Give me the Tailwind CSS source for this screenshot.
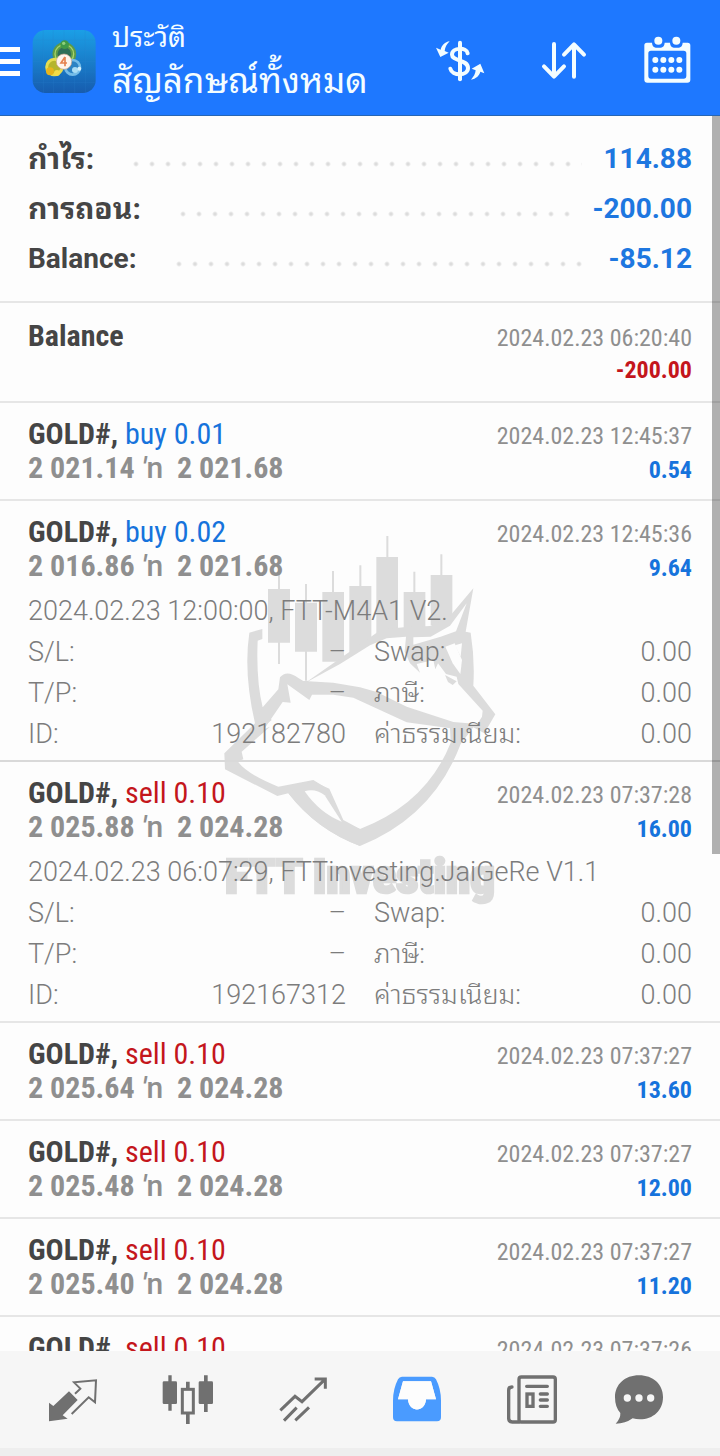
<!DOCTYPE html>
<html lang="th">
  <head>
    <meta charset="UTF-8" />
    <meta name="viewport" content="width=device-width, initial-scale=1.0" />
    <title>ประวัติ</title>
    <script src="https://cdn.jsdelivr.net/npm/@tailwindcss/browser@4"></script>
  </head>
  <body class="h-screen flex flex-col overflow-hidden bg-[#fdfdfd] text-[#8f8f8f] font-[Roboto,'Noto_Sans_Thai_Looped',Loma,'Noto_Sans_Thai','Noto_Sans',sans-serif]">
    <header class="h-[116px] shrink-0 flex items-center bg-[#1e78ff] border-b border-[#2766b4] text-[#f4fdff] pt-2 pr-6">
      <button aria-label="Menu" class="w-5 flex flex-col gap-[7px]">
        <span class="h-[5px] w-full bg-white"></span>
        <span class="h-[5px] w-full bg-white"></span>
        <span class="h-[5px] w-full bg-white"></span>
      </button>
      <svg class="ml-3 size-16 shrink-0" viewBox="96 88 192 192">
        <defs>
          <linearGradient id="tile" x1="0" y1="0" x2="0" y2="1">
            <stop offset="0" stop-color="#1b9fe6" />
            <stop offset="1" stop-color="#175cae" />
          </linearGradient>
        </defs>
        <rect x="98" y="88" width="189" height="189" rx="38" fill="url(#tile)" />
        <path d="M130 88v189M160 88v189M192 88v189M224 88v189M256 88v189M98 118h189M98 150h189M98 182h189M98 214h189M98 246h189" stroke="#2d86d0" stroke-width="1" opacity=".6" />
        <circle cx="193" cy="160" r="28" fill="#2f6f58" stroke="#5c9a48" stroke-width="15" />
        <circle cx="193" cy="160" r="28" fill="none" stroke="#a8d56a" stroke-width="4" />
        <circle cx="194" cy="132" r="13" fill="#3f9a48" />
        <circle cx="191" cy="128" r="5" fill="#8fd07c" />
        <circle cx="163" cy="199" r="23" fill="#b5b52c" stroke="#e5dc50" stroke-width="9" />
        <circle cx="150" cy="212" r="12" fill="#e8b51c" />
        <circle cx="171" cy="217" r="9" fill="#f6dc45" />
        <circle cx="218" cy="200" r="22" fill="#2d83c4" stroke="#75bce8" stroke-width="8" />
        <circle cx="225" cy="208" r="9" fill="#a9dcf5" />
        <circle cx="238" cy="204" r="6" fill="#d7f1fb" />
        <circle cx="192" cy="183" r="23" fill="#fff5ec" stroke="#c9a38b" stroke-width="2" />
        <path d="M195 169l-12 18h18M195 169v28" fill="none" stroke="#e58250" stroke-width="5" />
      </svg>
      <div class="ml-4 flex-1 min-w-0 whitespace-nowrap">
        <p class="text-[28px] leading-[40px]">ประวัติ</p>
        <h1 class="text-[35px] leading-[48px]">สัญลักษณ์ทั้งหมด</h1>
      </div>
      <div class="flex gap-12">
        <button aria-label="Symbols">
          <svg class="size-14" viewBox="96 102 168 168" fill="none" stroke="currentColor" stroke-linecap="round">
            <path d="M203 160C200 141 156 142 156 164c0 20 48 14 48 40 0 25-48 25-53 2" stroke-width="12" />
            <path d="M180 128v110" stroke-width="12" />
            <path d="M149 124c-14 2-24 12-27 25l-14-6 13 28 25-13-12-5c1-12 6-20 15-29zM213 239c15-3 25-12 28-24l12 5-12-29-26 15 12 5c-1 11-6 19-14 28z" fill="currentColor" stroke="none" />
          </svg>
        </button>
        <button aria-label="Sort">
          <svg class="size-14" viewBox="408 102 168 168" fill="none" stroke="currentColor" stroke-width="12" stroke-linecap="round" stroke-linejoin="round">
            <path d="M462 132v96M432 199l30 31 30-31M522 230v-96M492 164l30-31 30 31" />
          </svg>
        </button>
        <button aria-label="Calendar">
          <svg class="size-14" viewBox="719 102 168 168" fill="currentColor">
            <path fill-rule="evenodd" d="M740 128h15c1 14 9 15 19 15s18-1 19-15h16c1 14 9 15 19 15s18-1 19-15h15q8 0 8 8v103q0 9-9 9H741q-9 0-9-9V136q0-8 8-8zM752 152q-8 0-8 8v67q0 9 8 9h98q8 0 8-9v-67q0-8-8-8z" />
            <circle cx="774" cy="122" r="12" />
            <circle cx="828" cy="122" r="12" />
            <circle cx="765" cy="180" r="9" /><circle cx="789" cy="180" r="9" /><circle cx="813" cy="180" r="9" /><circle cx="837" cy="180" r="9" />
            <circle cx="765" cy="209" r="9" /><circle cx="789" cy="209" r="9" /><circle cx="813" cy="209" r="9" /><circle cx="837" cy="209" r="9" />
          </svg>
        </button>
      </div>
    </header>

    <main class="relative isolate flex-1 min-h-0 overflow-hidden">
      <!-- watermark -->
      <svg class="absolute -z-10 top-[416px] left-1/2 -translate-x-1/2 w-[280px] h-[390px]" viewBox="60 36 840 1170" fill="#dcdcdc">
        <path d="M234 160h6v272h-6zM315 192h6v290h-6zM396 153h6v100h-6zM478 136h6v100h-6zM559 48h6v100h-6zM640 155h6v100h-6zM721 103h6v100h-6z" />
        <path d="M204 207h66v161h-66zM285 248h66v147h-66zM367 216h65v209h-65zM448 198h66v200h-66zM529 111h65v240h-65zM611 216h65v140h-65zM692 165h65v150h-65z" />
        <path d="M325 482L545 328L612 322L690 318L748 290L820 205L797 335L812 338Q825 420 820 497L886 583L853 640L820 622L782 672Q700 890 480 978Q350 930 265 820L232 828L75 748L73 700L165 610Q130 460 148 338L187 327V357L173 362Q168 480 188 562L235 508L240 472Q260 448 295 474L310 483Z" />
        <g fill="#fdfdfd">
          <path d="M325 484L420 432L510 376L560 355L618 350L614 395L630 430L660 458L650 432L700 420L706 448L714 430L738 462L770 470L775 492L848 572L846 590L832 612L760 606L620 560L530 516L480 502L400 488Z" />
          <path d="M736 380L764 370L786 420L781 462L758 430Z" />
          <path d="M640 352L692 350L750 317L800 250L768 334L722 350L640 374Z" />
          <path d="M765 376L786 370L782 410Z" />
          <path d="M262 493L328 540L336 524L400 524L460 533L620 607L750 625L752 668Q680 850 480 927L430 905L385 808L340 780L235 800Q140 762 113 724L130 718L125 695L210 620L192 628L248 546L272 548Z" />
          <path d="M314 814Q345 804 374 826L425 905Q360 880 314 814Z" />
        </g>
        <!-- lower jaw and left edge of the shield -->
        <path d="M265 820L335 782L388 806L430 900L480 927V978Q350 930 265 820ZM165 610L188 562L215 600L165 640Z" />
        <path d="M314 814Q345 804 374 826L425 905Q360 880 314 814Z" fill="#fdfdfd" />
        <path d="M735 465L770 484L758 495L744 486Z" />
        <text x="480" y="1120" text-anchor="middle" font-size="146" font-weight="900" font-family="'Roboto Condensed', Roboto, sans-serif" stroke="#dcdcdc" stroke-width="8">FTT Investing</text>
      </svg>

      <!-- totals -->
      <dl class="border-b-2 border-[#e6e6e6] pt-[18px] pb-[17px] px-7 text-[28px] leading-[50px] font-bold">
        <div class="flex h-[50px]">
          <dt class="text-[30px] text-[#454545]">กำไร:</dt>
          <dd class="flex-1 flex before:content-[''] before:flex-1 before:ml-[34px] before:mr-[22px] before:h-4 before:mt-[22px] before:bg-[radial-gradient(circle,#dcdcdc_1px,transparent_3px)] before:bg-[length:16px_16px] text-[#1e77e0]">114.88</dd>
        </div>
        <div class="flex h-[50px]">
          <dt class="text-[30px] text-[#454545]">การถอน:</dt>
          <dd class="flex-1 flex before:content-[''] before:flex-1 before:ml-[34px] before:mr-[22px] before:h-4 before:mt-[22px] before:bg-[radial-gradient(circle,#dcdcdc_1px,transparent_3px)] before:bg-[length:16px_16px] text-[#1e77e0]">-200.00</dd>
        </div>
        <div class="flex h-[50px]">
          <dt class="text-[#454545]">Balance:</dt>
          <dd class="flex-1 flex before:content-[''] before:flex-1 before:ml-[34px] before:mr-[22px] before:h-4 before:mt-[22px] before:bg-[radial-gradient(circle,#dcdcdc_1px,transparent_3px)] before:bg-[length:16px_16px] text-[#1e77e0]">-85.12</dd>
        </div>
      </dl>

      <!-- deals -->
      <ul class="font-['Roboto_Condensed','Liberation_Sans_Narrow',sans-serif] leading-[34px] whitespace-nowrap">
        <li class="border-b-2 border-[#e6e6e6] px-7 pt-4 pb-3.5">
          <div class="flex h-[34px] justify-between items-baseline"><b class="text-[30px] text-[#454545]">Balance</b><time class="text-[24px]">2024.02.23 06:20:40</time></div>
          <div class="flex h-[34px] justify-end items-baseline"><b class="text-[24px] text-[#c4161c]">-200.00</b></div>
        </li>
        <li class="border-b-2 border-[#e6e6e6] px-7 py-3.5">
          <div class="flex h-[34px] justify-between items-baseline"><span class="text-[30px] text-[#1673dc]"><b class="text-[#454545]">GOLD#,</b> buy 0.01</span><time class="text-[24px]">2024.02.23 12:45:37</time></div>
          <div class="flex h-[34px] justify-between items-baseline"><b class="text-[30px]">2 021.14 <span class="font-[Roboto] font-medium"><i>′</i>n</span>&nbsp; 2 021.68</b><b class="text-[24px] text-[#1673dc]">0.54</b></div>
        </li>
        <li class="border-b-2 border-[#d9d9d9] px-7 pt-3.5 pb-[5px]">
          <div class="flex h-[34px] justify-between items-baseline"><span class="text-[30px] text-[#1673dc]"><b class="text-[#454545]">GOLD#,</b> buy 0.02</span><time class="text-[24px]">2024.02.23 12:45:36</time></div>
          <div class="flex h-[34px] justify-between items-baseline"><b class="text-[30px]">2 016.86 <span class="font-[Roboto] font-medium"><i>′</i>n</span>&nbsp; 2 021.68</b><b class="text-[24px] text-[#1673dc]">9.64</b></div>
          <div class="pt-2 font-[Roboto,'Noto_Sans_Thai_Looped',Loma,'Noto_Sans_Thai',sans-serif] font-light text-[27px] leading-[41px] text-[#7c7c7c]">
            <p>2024.02.23 12:00:00, FTT-M4A1 V2.</p>
            <dl class="grid grid-cols-2 auto-rows-[41px] gap-x-7">
              <div class="flex justify-between"><dt>S/L:</dt><dd>–</dd></div>
              <div class="flex justify-between"><dt>Swap:</dt><dd>0.00</dd></div>
              <div class="flex justify-between"><dt>T/P:</dt><dd>–</dd></div>
              <div class="flex justify-between"><dt>ภาษี:</dt><dd>0.00</dd></div>
              <div class="flex justify-between"><dt>ID:</dt><dd>192182780</dd></div>
              <div class="flex justify-between"><dt>ค่าธรรมเนียม:</dt><dd>0.00</dd></div>
            </dl>
          </div>
        </li>
        <li class="border-b-2 border-[#e6e6e6] px-7 pt-3.5 pb-[5px]">
          <div class="flex h-[34px] justify-between items-baseline"><span class="text-[30px] text-[#c4161c]"><b class="text-[#454545]">GOLD#,</b> sell 0.10</span><time class="text-[24px]">2024.02.23 07:37:28</time></div>
          <div class="flex h-[34px] justify-between items-baseline"><b class="text-[30px]">2 025.88 <span class="font-[Roboto] font-medium"><i>′</i>n</span>&nbsp; 2 024.28</b><b class="text-[24px] text-[#1673dc]">16.00</b></div>
          <div class="pt-2 font-[Roboto,'Noto_Sans_Thai_Looped',Loma,'Noto_Sans_Thai',sans-serif] font-light text-[27px] leading-[41px] text-[#7c7c7c]">
            <p>2024.02.23 06:07:29, FTTinvesting.JaiGeRe V1.1</p>
            <dl class="grid grid-cols-2 auto-rows-[41px] gap-x-7">
              <div class="flex justify-between"><dt>S/L:</dt><dd>–</dd></div>
              <div class="flex justify-between"><dt>Swap:</dt><dd>0.00</dd></div>
              <div class="flex justify-between"><dt>T/P:</dt><dd>–</dd></div>
              <div class="flex justify-between"><dt>ภาษี:</dt><dd>0.00</dd></div>
              <div class="flex justify-between"><dt>ID:</dt><dd>192167312</dd></div>
              <div class="flex justify-between"><dt>ค่าธรรมเนียม:</dt><dd>0.00</dd></div>
            </dl>
          </div>
        </li>
        <li class="border-b-2 border-[#e6e6e6] px-7 py-3.5">
          <div class="flex h-[34px] justify-between items-baseline"><span class="text-[30px] text-[#c4161c]"><b class="text-[#454545]">GOLD#,</b> sell 0.10</span><time class="text-[24px]">2024.02.23 07:37:27</time></div>
          <div class="flex h-[34px] justify-between items-baseline"><b class="text-[30px]">2 025.64 <span class="font-[Roboto] font-medium"><i>′</i>n</span>&nbsp; 2 024.28</b><b class="text-[24px] text-[#1673dc]">13.60</b></div>
        </li>
        <li class="border-b-2 border-[#e6e6e6] px-7 py-3.5">
          <div class="flex h-[34px] justify-between items-baseline"><span class="text-[30px] text-[#c4161c]"><b class="text-[#454545]">GOLD#,</b> sell 0.10</span><time class="text-[24px]">2024.02.23 07:37:27</time></div>
          <div class="flex h-[34px] justify-between items-baseline"><b class="text-[30px]">2 025.48 <span class="font-[Roboto] font-medium"><i>′</i>n</span>&nbsp; 2 024.28</b><b class="text-[24px] text-[#1673dc]">12.00</b></div>
        </li>
        <li class="border-b-2 border-[#e6e6e6] px-7 py-3.5">
          <div class="flex h-[34px] justify-between items-baseline"><span class="text-[30px] text-[#c4161c]"><b class="text-[#454545]">GOLD#,</b> sell 0.10</span><time class="text-[24px]">2024.02.23 07:37:27</time></div>
          <div class="flex h-[34px] justify-between items-baseline"><b class="text-[30px]">2 025.40 <span class="font-[Roboto] font-medium"><i>′</i>n</span>&nbsp; 2 024.28</b><b class="text-[24px] text-[#1673dc]">11.20</b></div>
        </li>
        <li class="px-7 py-3.5">
          <div class="flex h-[34px] justify-between items-baseline"><span class="text-[30px] text-[#c4161c]"><b class="text-[#454545]">GOLD#,</b> sell 0.10</span><time class="text-[24px]">2024.02.23 07:37:26</time></div>
        </li>
      </ul>

      <!-- scroll thumb -->
      <div class="absolute right-0 top-0 w-2 h-[738px] bg-black/30"></div>
    </main>

    <nav class="h-[105px] shrink-0 grid grid-cols-6 justify-items-center items-center px-4 bg-[#f6f6f6] border-b-8 border-[#eeeeee] text-[#707070]">
      <button aria-label="Quotes">
        <svg class="size-14" viewBox="137 214 168 168">
          <path d="M149 306L162 316L209 272L235 298L190 344L205 354L149 362Z" fill="currentColor" />
          <path d="M227 279L243 264L224 245L290 239L287 305L268 290L217 340" fill="none" stroke="currentColor" stroke-width="6" />
        </svg>
      </button>
      <button aria-label="Charts">
        <svg class="size-14" viewBox="482 214 168 168" fill="currentColor">
          <path d="M507 224h10v106h-10zM614 224h11v110h-11zM560 243h11v22h-11zM560 338h11v32h-11z" />
          <rect x="490" y="242" width="43" height="68" rx="4" />
          <rect x="598" y="242" width="43" height="68" rx="4" />
          <rect x="549" y="266" width="33" height="71" fill="none" stroke="currentColor" stroke-width="9" />
        </svg>
      </button>
      <button aria-label="Trade">
        <svg class="size-14" viewBox="825 214 168 168" fill="none" stroke="currentColor" stroke-width="9">
          <path d="M841 329L885 287L906 303L974 237M944 235H976V264M852 360L890 321M886 359L927 320" />
        </svg>
      </button>
      <button aria-label="History" class="text-[#4a9bff]">
        <svg class="size-14" viewBox="91 214 168 168" fill="currentColor">
          <path fill-rule="evenodd" d="M130 228H220Q228 228 232 236Q247 265 247 300V350Q247 362 235 362H115Q103 362 103 350V300Q103 265 118 236Q122 228 130 228ZM133 242L118 296H148C151 337 199 337 202 296H232L217 242Z" />
          <path d="M133 242L118 296H148C151 337 199 337 202 296H232L217 242Z" fill="#fdfdfd" />
        </svg>
      </button>
      <button aria-label="News">
        <svg class="size-14" viewBox="437 214 168 168" fill="none" stroke="currentColor" stroke-width="10" stroke-linecap="round">
          <rect x="482" y="229" width="109" height="135" rx="7" />
          <path d="M461 259Q451 259 451 269V353Q451 364 462 364H482M505 257H567M546 280H567M546 298H567M546 317H567" />
          <rect x="506" y="280" width="18" height="37" />
        </svg>
      </button>
      <button aria-label="Messages" class="mr-4">
        <svg class="size-14" viewBox="753 214 168 168" fill="currentColor">
          <path d="M837 224C879 224 909 251 909 289C909 330 879 356 840 356Q828 356 818 353Q796 369 767 369Q782 354 781 337Q765 320 765 290C765 251 795 224 837 224Z" />
          <circle cx="802" cy="292" r="11" fill="#f6f6f6" />
          <circle cx="837" cy="292" r="11" fill="#f6f6f6" />
          <circle cx="872" cy="292" r="11" fill="#f6f6f6" />
        </svg>
      </button>
    </nav>
  </body>
</html>
